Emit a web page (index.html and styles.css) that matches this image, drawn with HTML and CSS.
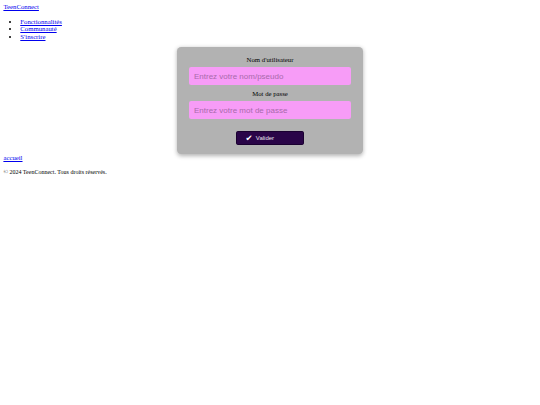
FILE: index.html
```html
<!DOCTYPE html>
<html lang="fr">
<head>
<meta charset="utf-8">
<title>TeenConnect</title>
<link rel="stylesheet" href="styles.css">
</head>
<body>
<header class="site-header">
  <a href="#" class="brand">TeenConnect</a>
  <nav>
    <ul class="nav-list">
      <li><a href="#">Fonctionnalités</a></li>
      <li><a href="#">Communauté</a></li>
      <li><a href="#">S'inscrire</a></li>
    </ul>
  </nav>
</header>
<main>
  <form class="login-card">
    <label class="field-label" for="user">Nom d'utilisateur</label>
    <input class="field-input" id="user" type="text" placeholder="Entrez votre nom/pseudo">
    <label class="field-label" for="pass">Mot de passe</label>
    <input class="field-input" id="pass" type="password" placeholder="Entrez votre mot de passe">
    <button class="submit-btn" type="button"><span class="check">✔</span><span>Valider</span></button>
  </form>
  <a href="#" class="home-link">accueil</a>
</main>
<footer>
  <p class="copyright">© 2024 TeenConnect. Tous droits réservés.</p>
</footer>
</body>
</html>
```
FILE: styles.css
```css
body {
  margin: 3.4px;
  font-family: "Liberation Serif", "Times New Roman", serif;
  font-size: 6.75px;
  line-height: 7.6px;
  color: #000;
  background: #fff;
}
a {
  color: #0000ee;
}
.brand {
  display: inline-block;
}
.nav-list {
  margin: 6.75px 0;
  padding-left: 16.9px;
}
.login-card {
  width: 185.6px;
  box-sizing: border-box;
  margin: 0 auto;
  padding: 8.4px 11.8px 8.9px;
  background: #b2b2b2;
  border-radius: 4.2px;
  box-shadow: 0 1.7px 4.2px rgba(0, 0, 0, 0.3);
  display: flex;
  flex-direction: column;
  align-items: center;
}
.field-label {
  display: block;
  text-align: center;
  line-height: 7.6px;
}
.field-input {
  display: block;
  width: 100%;
  box-sizing: border-box;
  margin: 4.2px 0;
  padding: 4.3px 5px;
  border: none;
  border-radius: 2.1px;
  background: #f79cf7;
  font-family: "Liberation Sans", Arial, sans-serif;
  font-size: 8px;
  line-height: 9.3px;
  color: #333;
  outline: none;
}
.field-input::placeholder {
  color: #a86aab;
}
.submit-btn {
  margin-top: 7.6px;
  width: 68.3px;
  height: 14.3px;
  box-sizing: border-box;
  padding: 0 8.6px;
  display: flex;
  align-items: center;
  gap: 3.4px;
  border: 0.5px solid #1a0030;
  border-radius: 1.7px;
  background: #2a0548;
  color: #e8e0f0;
  font-family: "Liberation Sans", Arial, sans-serif;
  font-size: 6px;
  line-height: 7px;
}
.check {
  font-family: "DejaVu Sans", sans-serif;
  font-size: 8.4px;
  line-height: 8px;
  color: #fff;
}
.home-link {
  display: inline-block;
}
.copyright {
  margin: 6.75px 0;
  font-size: 6px;
  line-height: 6.8px;
}
```
